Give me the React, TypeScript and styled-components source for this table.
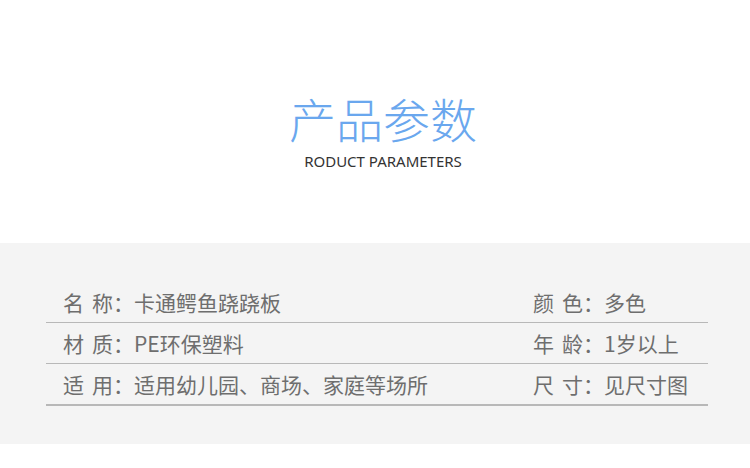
import React from 'react';
import styled, { createGlobalStyle } from 'styled-components';

const GlobalStyle = createGlobalStyle`
  html, body {
    margin: 0;
    padding: 0;
    background: #ffffff;
  }
  body {
    font-family: "Noto Sans CJK SC", "Noto Sans", sans-serif;
  }
`;

const Page = styled.div`
  width: 750px;
  height: 468px;
  display: flex;
  flex-direction: column;
  background: #ffffff;
`;

const Header = styled.div`
  height: 243px;
  display: flex;
  flex-direction: column;
  align-items: center;
  padding: 84px 0 0 16px;
  box-sizing: border-box;
`;

const Title = styled.h1`
  margin: 0;
  font-size: 47px;
  line-height: 68px;
  font-weight: 300;
  color: #6aa7ee;
`;

const Subtitle = styled.div`
  font-family: "Noto Sans", "Open Sans", sans-serif;
  font-size: 15px;
  line-height: 18px;
  color: #333333;
`;

const Band = styled.div`
  height: 201px;
  background: #f4f4f4;
  padding: 39px 42px 0 46px;
  box-sizing: border-box;
`;

const Row = styled.div<{ $last?: boolean }>`
  height: ${(p) => (p.$last ? '42px' : '41px')};
  display: flex;
  align-items: center;
  justify-content: space-between;
  border-bottom: ${(p) => (p.$last ? '2px' : '1px')} solid #b8b8b8;
  box-sizing: border-box;
  padding: 0 29px 0 17px;
`;

const Cell = styled.div<{ $width?: number }>`
  display: flex;
  align-items: center;
  font-size: 21px;
  line-height: 28px;
  color: #6e6e6e;
  white-space: pre;
  width: ${(p) => (p.$width ? `${p.$width}px` : 'auto')};
`;

const Label = styled.span`
  display: flex;
  gap: 8px;
`;

const rows = [
  [['名称', '卡通鳄鱼跷跷板'], ['颜色', '多色']],
  [['材质', 'PE环保塑料'], ['年龄', '1岁以上']],
  [['适用', '适用幼儿园、商场、家庭等场所'], ['尺寸', '见尺寸图']],
];

const Field = ({ label, value }: { label: string; value: string }) => (
  <>
    <Label>
      {label.split('').map((c, i) => (
        <span key={i}>{c}</span>
      ))}
    </Label>
    <span>：{value}</span>
  </>
);

export default function App() {
  return (
    <Page>
      <GlobalStyle />
      <Header>
        <Title>产品参数</Title>
        <Subtitle>RODUCT PARAMETERS</Subtitle>
      </Header>
      <Band>
        {rows.map((r, i) => (
          <Row key={i} $last={i === rows.length - 1}>
            <Cell>
              <Field label={r[0][0]} value={r[0][1]} />
            </Cell>
            <Cell $width={146}>
              <Field label={r[1][0]} value={r[1][1]} />
            </Cell>
          </Row>
        ))}
      </Band>
    </Page>
  );
}
